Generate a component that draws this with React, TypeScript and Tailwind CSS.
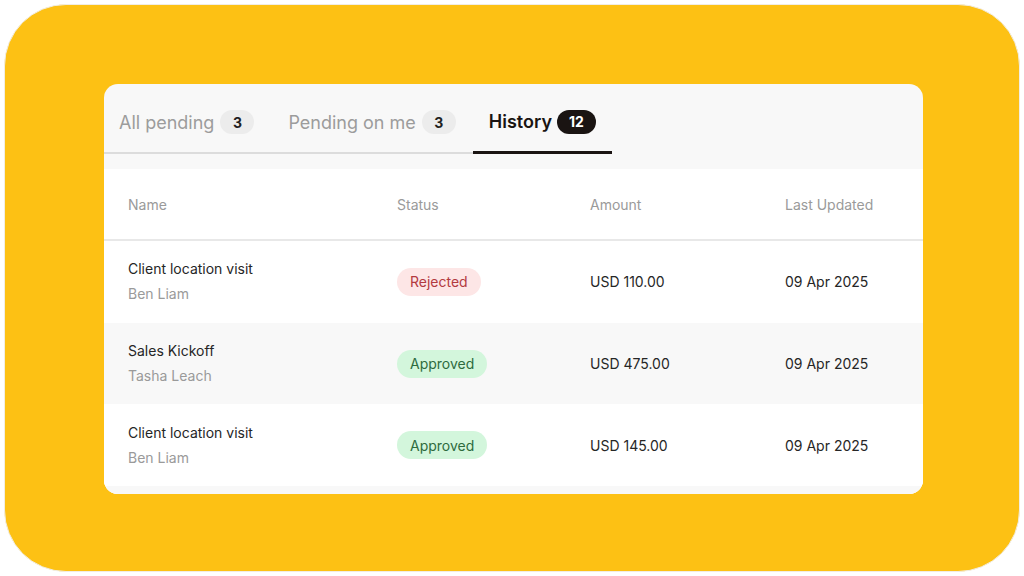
import React from "react";

type Row = {
  title: string;
  who: string;
  status: "Rejected" | "Approved";
  amount: string;
  date: string;
  shade: boolean;
};

const rows: Row[] = [
  { title: "Client location visit", who: "Ben Liam", status: "Rejected", amount: "USD 110.00", date: "09 Apr 2025", shade: false },
  { title: "Sales Kickoff", who: "Tasha Leach", status: "Approved", amount: "USD 475.00", date: "09 Apr 2025", shade: true },
  { title: "Client location visit", who: "Ben Liam", status: "Approved", amount: "USD 145.00", date: "09 Apr 2025", shade: false },
];

function Tab({ label, count, active }: { label: string; count: string; active?: boolean }) {
  return (
    <div
      className={
        active
          ? "flex h-[70px] items-center gap-[5px] px-[16px] pt-[8px] border-b-[3px] border-[#1a1412]"
          : "flex h-[70px] items-center gap-[6px] px-[17px] pt-[8px] border-b-2 border-[#dcdcdc]"
      }
    >
      <span
        className={
          active
            ? "text-[18px] font-semibold text-[#1a1412]"
            : "text-[18px] text-[#9c9c9c]"
        }
      >
        {label}
      </span>
      <span
        className={
          active
            ? "flex h-[24px] items-center justify-center rounded-full bg-[#1a1412] px-[12px] text-[14px] font-bold text-white"
            : "flex h-[24px] min-w-[34px] items-center justify-center rounded-full bg-[#ececec] px-[12px] text-[14px] font-bold text-[#1f1f1f]"
        }
      >
        {count}
      </span>
    </div>
  );
}

export default function App() {
  return (
    <div
      className="h-[576px] w-[1024px] bg-white p-[4px]"
      style={{ fontFamily: "Inter, 'Noto Sans', sans-serif" }}
    >
      <div className="h-full w-full rounded-[62px] border border-[#f1ede2] bg-[#fdc114] pl-[99px] pt-[79px]">
        <div className="flex h-[410px] w-[819px] flex-col overflow-hidden rounded-[14px] bg-[#f8f8f8]">
          <div className="ml-[-2px] flex items-start">
            <Tab label="All pending" count="3" />
            <Tab label="Pending on me" count="3" />
            <Tab label="History" count="12" active />
          </div>
          <div className="mt-[15px] flex-1 bg-white">
            <div className="grid h-[72px] grid-cols-[269px_193px_195px_1fr] items-center border-b-2 border-[#e8e8e8] pl-[24px] text-[14px] text-[#9a9a9a]">
              <span>Name</span>
              <span>Status</span>
              <span>Amount</span>
              <span>Last Updated</span>
            </div>
            {rows.map((r, i) => (
              <div
                key={i}
                className={
                  (r.shade ? "bg-[#f8f8f8] " : "bg-white ") +
                  "grid h-[81.7px] grid-cols-[269px_193px_195px_1fr] items-center pl-[24px] text-[14px]"
                }
              >
                <div className="flex flex-col gap-[5px]">
                  <span className="leading-[20px] text-[#262626]">{r.title}</span>
                  <span className="leading-[20px] text-[#9a9a9a]">{r.who}</span>
                </div>
                <div>
                  {r.status === "Rejected" ? (
                    <span className="inline-flex h-[28px] items-center rounded-full bg-[#fde6e6] px-[13px] text-[#b33a3f]">
                      Rejected
                    </span>
                  ) : (
                    <span className="inline-flex h-[28px] items-center rounded-full bg-[#d3f6dc] px-[13px] text-[#2e6b3e]">
                      Approved
                    </span>
                  )}
                </div>
                <span className="text-[#262626]">{r.amount}</span>
                <span className="text-[#262626]">{r.date}</span>
              </div>
            ))}
            <div className="h-[20px] bg-[#f8f8f8]" />
          </div>
        </div>
      </div>
    </div>
  );
}
